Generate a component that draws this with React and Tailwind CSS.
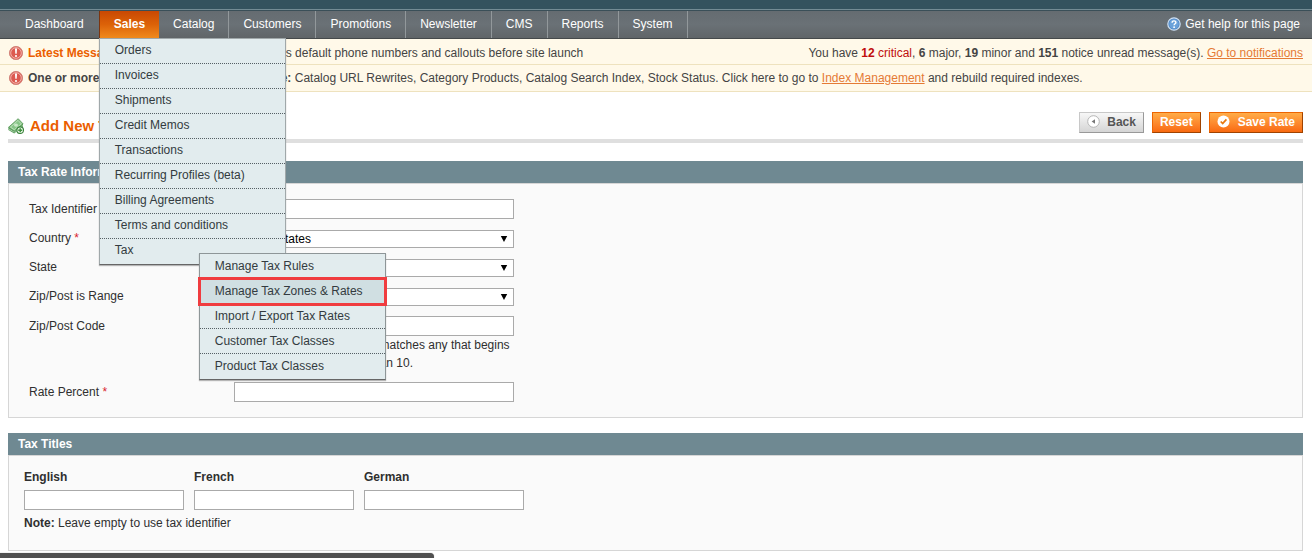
const NAV_AFTER = ['Catalog', 'Customers', 'Promotions', 'Newsletter', 'CMS', 'Reports', 'System'];

const SALES_MENU = [
  'Orders',
  'Invoices',
  'Shipments',
  'Credit Memos',
  'Transactions',
  'Recurring Profiles (beta)',
  'Billing Agreements',
  'Terms and conditions',
];

const TAX_MENU = [
  'Manage Tax Rules',
  'Manage Tax Zones & Rates',
  'Import / Export Tax Rates',
  'Customer Tax Classes',
  'Product Tax Classes',
];

function AlertIcon() {
  return (
    <svg className="size-4 shrink-0" viewBox="0 0 16 16" aria-hidden="true">
      <circle cx="8" cy="8" r="6.6" fill="#dc5a50" stroke="#d3857c" />
      <circle cx="8" cy="8" r="5.3" fill="none" stroke="#f3bdb6" strokeWidth="0.9" />
      <path d="M7 3.6h2l-.3 5.2H7.300z" fill="#fff" />
      <circle cx="8" cy="11" r="1.100" fill="#fff" />
    </svg>
  );
}

function HelpIcon() {
  return (
    <svg className="size-[14px] shrink-0" viewBox="0 0 14 14" aria-hidden="true">
      <circle cx="7" cy="7" r="6.200" fill="#4d86c4" stroke="#cfe0f2" strokeWidth="1.200" />
      <circle cx="7" cy="7" r="4.800" fill="#6ba2da" />
      <path d="M5.100 5.700c0-2.500 3.800-2.300 3.800-.2 0 1.300-1.800 1.300-1.800 2.800" fill="none" stroke="#fff" strokeWidth="1.400" />
      <circle cx="7.100" cy="10.200" r="0.900" fill="#fff" />
    </svg>
  );
}

function MoneyIcon() {
  return (
    <svg className="size-4 shrink-0" viewBox="0 0 16 16" aria-hidden="true">
      <path d="M.4 9.500V12l5.800 3.500 8.800-7V5.500z" fill="#5f9f60" />
      <path d="M.6 10.900 6.200 14 14.800 7.200" fill="none" stroke="#c4e3c1" strokeWidth="0.7" />
      <path d="M.5 9.300 10.200.7l4.900 5.200-8.900 7.300z" fill="#86c486" stroke="#559456" strokeWidth="0.8" />
      <path d="M2.500 9.100 10 2.400l3.300 3.500-7 5.800z" fill="none" stroke="#cfeacc" strokeWidth="0.7" />
      <ellipse cx="8" cy="7.100" rx="2" ry="1.600" fill="#cbe9c8" />
      <circle cx="12.200" cy="12.200" r="3.300" fill="#e9f6e6" stroke="#3c853e" strokeWidth="1.100" />
      <path d="M12.200 10.200v4M10.200 12.200h4" stroke="#3c8f3c" strokeWidth="1.400" />
    </svg>
  );
}

function BackIcon() {
  return (
    <svg className="size-[13px] shrink-0" viewBox="0 0 13 13" aria-hidden="true">
      <circle cx="6.500" cy="6.500" r="5.800" fill="#fff" stroke="#b5b5b5" />
      <path d="M8 4.300v4.400L4.600 6.500z" fill="#777" />
    </svg>
  );
}

function SaveIcon() {
  return (
    <svg className="size-[13px] shrink-0" viewBox="0 0 13 13" aria-hidden="true">
      <circle cx="6.500" cy="6.500" r="6" fill="#fff" />
      <path d="M3.700 6.500 5.700 8.600 9.400 4.400" fill="none" stroke="#e8790f" strokeWidth="1.700" />
    </svg>
  );
}

function TaxMenu() {
  return (
    <ul className="absolute top-[214px] left-[99px] z-10 w-[187px] border border-[#8e9698] border-b-[#666] bg-[#e2ecee] shadow-[0_1px_1px_#8889]">
      {TAX_MENU.map((label, i) => (
        <li
          key={label}
          className={
            i === 1
              ? 'relative bg-[#d0dfe2] outline-3 -outline-offset-1 outline-[#f03c3f]'
              : i < 4 && i > 1
                ? 'border-b border-dotted border-[#555f64]'
                : ''
          }
        >
          <a href="#" className={i > 1 && i < 4 ? 'block h-6 px-[15px] leading-6' : 'block h-[25px] px-[15px] leading-6'}>
            {label}
          </a>
        </li>
      ))}
    </ul>
  );
}

function SalesMenu() {
  return (
    <ul className="absolute top-[27px] left-0 z-10 w-[187px] border border-[#a0a8aa] border-b-[#666] bg-[#e2ecee] text-[#333b40] shadow-[0_1px_1px_#8889]">
      {SALES_MENU.map((label) => (
        <li key={label} className="border-b border-dotted border-[#555f64]">
          <a href="#" className="block h-6 px-[15px] leading-[22px]">
            {label}
          </a>
        </li>
      ))}
      <li>
        <a href="#" className="block h-[25px] px-[15px] leading-[22px]">
          Tax
        </a>
        <TaxMenu />
      </li>
    </ul>
  );
}

function Nav() {
  return (
    <nav className="flex h-[29px] items-stretch justify-between border-t border-b border-t-[#3a4f58] border-b-[#45494a] bg-linear-to-b from-[#656c71] via-[#6a7176] to-[#606568] pr-3 text-white">
      <ul className="flex pl-[11px] leading-[26px]">
        <li className="pr-[15px] pl-[14px]">
          <a href="#">Dashboard</a>
        </li>
        <li className="relative">
          <a
            href="#"
            className="block h-[27px] border-l border-[#7a3510] bg-linear-to-b from-[#c94803] via-[#dc6208] to-[#f08a1c] px-[14px] font-bold"
          >
            Sales
          </a>
          <SalesMenu />
        </li>
        {NAV_AFTER.map((label) => (
          <li key={label} className="border-r border-[#92989b] px-[14px]">
            <a href="#">{label}</a>
          </li>
        ))}
      </ul>
      <a href="#" className="flex items-center gap-1 pb-[2px]">
        <HelpIcon />
        Get help for this page
      </a>
    </nav>
  );
}

function Messages() {
  return (
    <div className="bg-[#fff9e9] leading-6 text-[#444]">
      <div className="flex h-[26px] items-center justify-between border-b border-[#eee2be] pt-[2px] pr-[9px] pl-2">
        <p className="flex items-center gap-1">
          <AlertIcon />
          <span>
            <strong className="mr-2 text-[#eb5e00]">Latest Message:</strong> Reminder: Change Magento's default phone
            numbers and callouts before site launch
          </span>
        </p>
        <p>
          You have{' '}
          <span className="text-[#c00d0d]">
            <strong>12</strong> critical
          </span>
          , <strong>6</strong> major, <strong>19</strong> minor and <strong>151</strong> notice unread message(s).{' '}
          <a href="#" className="text-[#e57a35] underline">
            Go to notifications
          </a>
        </p>
      </div>
      <div className="flex h-[27px] items-center gap-1 border-b border-[#eee2be] px-2">
        <AlertIcon />
        <p>
          <strong>One or more of the Indexes are not up to date:</strong> Catalog URL Rewrites, Category Products,
          Catalog Search Index, Stock Status. Click here to go to{' '}
          <a href="#" className="text-[#e57a35] underline">
            Index Management
          </a>{' '}
          and rebuild required indexes.
        </p>
      </div>
    </div>
  );
}

const ORANGE_BUTTON =
  'flex h-[21px] items-center border border-[#ed6502] border-r-[#a04300] border-b-[#a04300] bg-linear-to-b from-[#ffac47] to-[#f9690e] px-[7px] pb-[2px] font-bold text-white';

function Heading() {
  return (
    <div className="flex h-[31px] items-start justify-between border-b-4 border-[#dfdfdf]">
      <h1 className="flex items-center gap-[6px] pt-[2px] text-[15px] leading-6 font-bold text-[#eb5e00]">
        <MoneyIcon />
        Add New Tax Rate
      </h1>
      <div className="flex gap-2">
        <button
          type="button"
          className="flex h-[21px] items-center gap-[7px] border border-[#c8c8c8] border-r-[#999] border-b-[#999] bg-linear-to-b from-[#f7f7f7] to-[#d5d5d5] px-[7px] pb-[2px] font-bold text-[#555]"
        >
          <BackIcon />
          Back
        </button>
        <button type="button" className={ORANGE_BUTTON}>
          Reset
        </button>
        <button type="button" className={ORANGE_BUTTON + ' gap-2'}>
          <SaveIcon />
          Save Rate
        </button>
      </div>
    </div>
  );
}

function Section({ title, children }) {
  return (
    <section>
      <h2 className="h-[22px] bg-[#6f8992] px-[10px] leading-[22px] font-bold text-white">{title}</h2>
      <div className="border border-[#d6d6d6] bg-[#fafafa]">{children}</div>
    </section>
  );
}

const INPUT = 'block h-5 border border-[#aaa] bg-white px-1 outline-none';

function Field({ id, label, required, select, options, note }) {
  return (
    <div className="flex items-start">
      <label htmlFor={id} className={select ? 'w-[205px] leading-[19px]' : 'w-[205px] leading-5'}>
        {label}
        {required && <span className="text-[#d9232e]"> *</span>}
      </label>
      <div className="w-[280px]">
        {select ? (
          <div className="relative pt-px">
            <select
              id={id}
              className="block h-[18px] w-full appearance-none border border-[#aaa] bg-white px-1 leading-4 text-black outline-none"
            >
              {options.map((o) => (
                <option key={o}>{o}</option>
              ))}
            </select>
            <svg className="pointer-events-none absolute top-[7px] right-[6px] h-[6px] w-2" viewBox="0 0 8 6" aria-hidden="true">
              <path d="M.8 0h6.400L4 6z" fill="#000" />
            </svg>
          </div>
        ) : (
          <input id={id} type="text" className={INPUT + ' w-full'} />
        )}
        {note && <p className="pl-[13px] leading-[18px]">{note}</p>}
      </div>
    </div>
  );
}

export default function App() {
  return (
    <div className="min-h-screen bg-white font-['Liberation_Sans',Arial,sans-serif] text-[12px] text-[#2f2f2f]">
      <header>
        <div className="h-[10px] border-b border-[#738b94] bg-[#34525e]" />
        <Nav />
      </header>
      <Messages />
      <main className="px-2 pt-5 pr-[9px]">
        <Heading />
        <div className="flex flex-col gap-[15px] pt-[18px]">
          <Section title="Tax Rate Information">
            <div className="flex flex-col gap-[10px] px-5 py-[15px]">
              <Field id="code" label="Tax Identifier" required />
              <Field id="country" label="Country" required select options={['United States']} />
              <Field id="state" label="State" select options={['*']} />
              <Field id="range" label="Zip/Post is Range" select options={['No']} />
              <Field
                id="zip"
                label="Zip/Post Code"
                note="'*' - matches any; 'xyz*' - matches any that begins on 'xyz' and not longer than 10."
              />
              <Field id="rate" label="Rate Percent" required />
            </div>
          </Section>
          <Section title="Tax Titles">
            <div className="px-[15px] pt-3 pb-[18px]">
              <div className="flex gap-[10px]">
                {['English', 'French', 'German'].map((lang) => (
                  <label key={lang} className="w-40 font-bold">
                    <span className="mb-1 block leading-[18px]">{lang}</span>
                    <input type="text" className={INPUT + ' w-full'} />
                  </label>
                ))}
              </div>
              <p className="pt-1 leading-[18px]">
                <strong>Note:</strong> Leave empty to use tax identifier
              </p>
            </div>
          </Section>
        </div>
      </main>
      <div className="fixed bottom-0 left-0 h-[5px] w-[434px] rounded-tr bg-[#505050] shadow-[0_0_1px_#888]" />
    </div>
  );
}
